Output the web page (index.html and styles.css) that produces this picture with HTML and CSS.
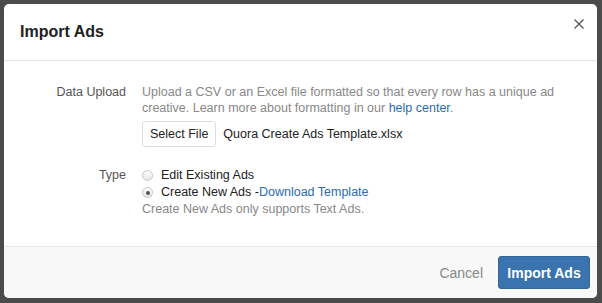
FILE: index.html
```html
<!DOCTYPE html>
<html lang="en">
<head>
    <meta charset="UTF-8">
    <title>Import Ads</title>
    <link rel="stylesheet" href="styles.css">
</head>
<body>
    <div class="modal">
        <header class="modal-header">
            <h1>Import Ads</h1>
            <button class="close-button" type="button" aria-label="Close">
                <svg width="10" height="10" viewBox="0 0 10 10"><path d="M0.5 0.5L9.5 9.5M9.5 0.5L0.5 9.5" stroke="#555" stroke-width="1.3" fill="none"/></svg>
            </button>
        </header>
        <div class="modal-body">
            <div class="form-row">
                <div class="row-label">Data Upload</div>
                <div class="row-content">
                    <p class="help-text">Upload a CSV or an Excel file formatted so that every row has a unique ad creative. Learn more about formatting in our <a href="#">help center</a>.</p>
                    <div class="file-select">
                        <button class="file-button" type="button">Select File</button>
                        <span class="file-name">Quora Create Ads Template.xlsx</span>
                    </div>
                </div>
            </div>
            <div class="form-row type-row">
                <div class="row-label">Type</div>
                <div class="row-content">
                    <label class="radio-option"><span class="radio"></span>Edit Existing Ads</label>
                    <label class="radio-option"><span class="radio checked"></span>Create New Ads -<a href="#">Download Template</a></label>
                    <p class="help-text note">Create New Ads only supports Text Ads.</p>
                </div>
            </div>
        </div>
        <footer class="modal-footer">
            <a href="#" class="cancel-link">Cancel</a>
            <button class="primary-button" type="button">Import Ads</button>
        </footer>
    </div>
</body>
</html>
```

FILE: styles.css
```css
body {
    margin: 0;
    padding: 4px 5px 5px 4px;
    background-color: #4b4b4b;
    font-family: "Liberation Sans", Arial, sans-serif;
    color: #222;
    height: 303px;
    box-sizing: border-box;
}
.modal {
    background: #ffffff;
    border-radius: 5px;
    height: 294px;
    display: flex;
    flex-direction: column;
    overflow: hidden;
}

/* header */
.modal-header {
    display: flex;
    justify-content: space-between;
    align-items: flex-start;
    height: 56px;
    border-bottom: 1px solid #e5e5e5;
    padding: 0 13px 0 16px;
}
.modal-header h1 {
    margin: 19px 0 0 0;
    font-size: 16px;
    font-weight: bold;
    color: #222;
}
.close-button {
    background: none;
    border: none;
    padding: 0;
    margin-top: 15px;
    width: 10px;
    height: 10px;
    cursor: pointer;
}
.close-button svg { display: block; }

/* body */
.modal-body {
    flex: 1;
    padding: 23px 0 0 0;
    font-size: 12.5px;
}
.form-row {
    display: flex;
    gap: 16px;
}
.type-row { margin-top: 20px; }
.row-label {
    width: 122px;
    text-align: right;
    color: #555;
    line-height: 16px;
}
.row-content {
    flex: 1;
    padding-right: 30px;
}
.help-text {
    margin: 0;
    color: #888;
    line-height: 16px;
}
.help-text.note { line-height: 17px; }
a {
    color: #2b6cb0;
    text-decoration: none;
}
.file-select {
    display: flex;
    align-items: center;
    gap: 7px;
    margin-top: 5px;
}
.file-button {
    font-family: inherit;
    font-size: 12.5px;
    color: #222;
    background: #fff;
    border: 1px solid #ddd;
    border-radius: 3px;
    padding: 0 7px;
    height: 26px;
}
.file-name { color: #222; }
.radio-option {
    display: flex;
    align-items: center;
    color: #222;
    line-height: 17px;
}
.radio {
    width: 9px;
    height: 9px;
    border-radius: 50%;
    border: 1px solid #c8c8c8;
    background: linear-gradient(#fdfdfd, #e6e6e6);
    margin: 0 8px 0 0;
    position: relative;
}
.radio.checked::after {
    content: "";
    position: absolute;
    left: 2.5px;
    top: 2.5px;
    width: 4px;
    height: 4px;
    border-radius: 50%;
    background: #555;
}

/* footer */
.modal-footer {
    display: flex;
    justify-content: flex-end;
    align-items: center;
    gap: 15px;
    height: 51px;
    background: #f8f8f8;
    border-top: 1px solid #e5e5e5;
    padding: 0 7px 0 0;
}
.cancel-link {
    color: #888;
    font-size: 14px;
}
.primary-button {
    font-family: inherit;
    font-size: 14px;
    font-weight: bold;
    color: #fff;
    white-space: nowrap;
    background: #3a73ad;
    border: 1px solid #326799;
    border-radius: 3px;
    width: 92px;
    height: 33px;
    padding: 0;
}
```
